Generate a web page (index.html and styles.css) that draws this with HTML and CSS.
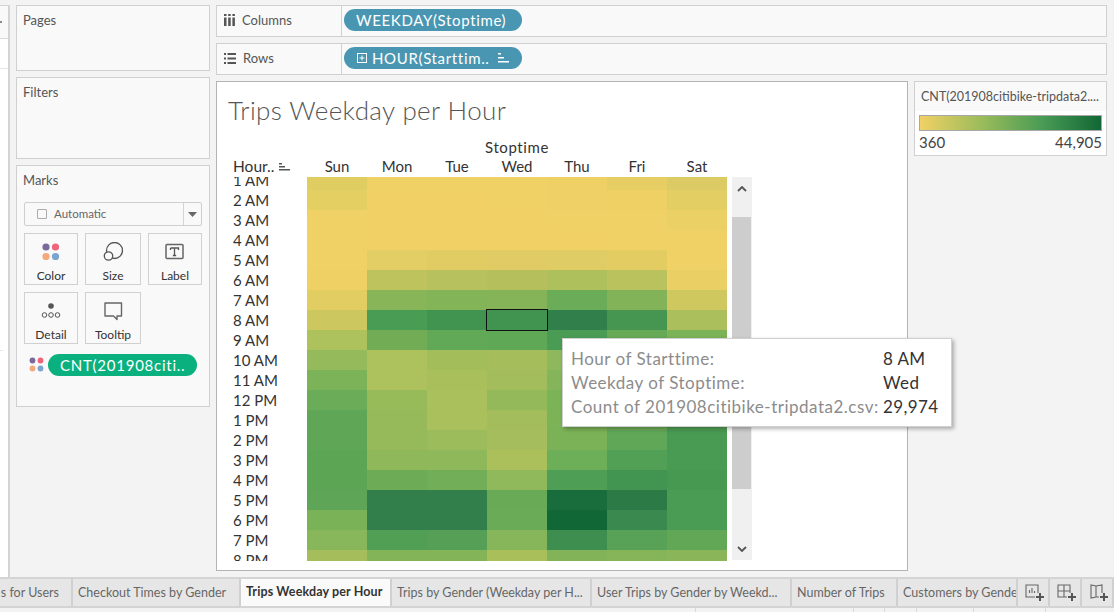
FILE: index.html
```html
<!DOCTYPE html>
<html lang="en">
<head>
<meta charset="utf-8">
<title>Trips Weekday per Hour</title>
<link rel="stylesheet" href="styles.css">
</head>
<body>
<div class="app">
  <div class="main">
    <aside class="stub">
      <div class="stub-head"><span class="stub-mark"></span></div>
      <div class="stub-row"></div>
      <div class="stub-row stub-long"></div>
    </aside>

    <section class="cards">
      <div class="card card-pages"><h2 class="card-title">Pages</h2></div>
      <div class="card card-filters"><h2 class="card-title">Filters</h2></div>
      <div class="card card-marks">
        <h2 class="card-title">Marks</h2>
        <div class="mark-select">
          <span class="mark-check"></span>
          <span class="mark-type">Automatic</span>
          <span class="mark-drop"><svg width="9" height="5" viewBox="0 0 9 5"><path d="M0 0h9L4.500 5z" fill="#666"/></svg></span>
        </div>
        <div class="mark-grid">
          <div class="mark-btn">
            <svg class="mark-icon" width="20" height="20" viewBox="0 0 20 20"><circle cx="5" cy="5" r="3.600" fill="#7a6a9c"/><circle cx="14.500" cy="5" r="3.600" fill="#ef6478"/><circle cx="5" cy="14.500" r="3.600" fill="#f2a97b"/><circle cx="14.500" cy="14.500" r="3.600" fill="#7ba4cf"/></svg>
            <span>Color</span>
          </div>
          <div class="mark-btn">
            <svg class="mark-icon" width="20" height="20" viewBox="0 0 20 20"><circle cx="11.500" cy="8.500" r="8" fill="none" stroke="#555" stroke-width="1.300"/><circle cx="5.500" cy="14" r="4.200" fill="#f9f9f9" stroke="#555" stroke-width="1.300"/></svg>
            <span>Size</span>
          </div>
          <div class="mark-btn">
            <svg class="mark-icon" width="20" height="20" viewBox="0 0 20 20"><rect x="1" y="2.500" width="17" height="14" rx="1" fill="none" stroke="#666" stroke-width="1.500"/><path d="M5.500 6h8v2M9.500 6v7.500M7.800 13.500h3.400M5.500 6v2" fill="none" stroke="#555" stroke-width="1.300"/></svg>
            <span>Label</span>
          </div>
          <div class="mark-btn">
            <svg class="mark-icon" width="20" height="20" viewBox="0 0 20 20"><circle cx="10" cy="5" r="2.800" fill="#555"/><circle cx="3.500" cy="14" r="2.300" fill="none" stroke="#555"/><circle cx="10" cy="14" r="2.300" fill="none" stroke="#555"/><circle cx="16.500" cy="14" r="2.300" fill="none" stroke="#555"/></svg>
            <span>Detail</span>
          </div>
          <div class="mark-btn">
            <svg class="mark-icon" width="20" height="20" viewBox="0 0 20 20"><path d="M2 2h16.500v13h-4.500v3.500L10.500 15H2z" fill="none" stroke="#666" stroke-width="1.400" stroke-linejoin="round"/></svg>
            <span>Tooltip</span>
          </div>
        </div>
        <div class="mark-field">
          <svg width="16" height="16" viewBox="0 0 16 16"><circle cx="3.500" cy="3.500" r="2.900" fill="#7a6a9c"/><circle cx="11.500" cy="3.500" r="2.900" fill="#ef6478"/><circle cx="3.500" cy="11.500" r="2.900" fill="#f2a97b"/><circle cx="11.500" cy="11.500" r="2.900" fill="#7ba4cf"/></svg>
          <span class="pill pill-green">CNT(201908citi..</span>
        </div>
      </div>
    </section>

    <section class="workspace">
      <div class="shelf">
        <div class="shelf-label">
          <svg width="11" height="12" viewBox="0 0 11 12"><path d="M0 0h2.500v2H0zM4.200 0h2.500v2H4.200zM8.400 0h2.500v2H8.400zM0 3.500h2.500V12H0zM4.200 3.500h2.500V12H4.200zM8.400 3.500h2.500V12H8.400z" fill="#555"/></svg>
          <span>Columns</span>
        </div>
        <div class="shelf-body"><span class="pill pill-blue">WEEKDAY(Stoptime)</span></div>
      </div>
      <div class="shelf">
        <div class="shelf-label">
          <svg width="12" height="11" viewBox="0 0 12 11"><path d="M0 0h2v2H0zM3.500 0H12v2H3.500zM0 4.500h2v2H0zM3.500 4.500H12v2H3.500zM0 9h2v2H0zM3.500 9H12v2H3.500z" fill="#555"/></svg>
          <span>Rows</span>
        </div>
        <div class="shelf-body">
          <span class="pill pill-blue pill-rows">
            <svg width="10" height="10" viewBox="0 0 10 10"><rect x=".5" y=".5" width="9" height="9" fill="none" stroke="#fff"/><path d="M2.500 5h5M5 2.500v5" stroke="#fff"/></svg>
            <span class="pill-text">HOUR(Starttim..</span>
            <svg width="11" height="10" viewBox="0 0 11 10"><path d="M0 0h3v1.500H0zM0 4h6v1.500H0zM0 8h11v1.500H0z" fill="#fff"/></svg>
          </span>
        </div>
      </div>

      <div class="stage">
        <div class="view">
          <h1 class="view-title">Trips Weekday per Hour</h1>
          <div class="field-head">Stoptime</div>
          <div class="axis">
            <div class="axis-corner">
              <span>Hour..</span>
              <svg width="11" height="8" viewBox="0 0 11 8"><path d="M0 0h3v1.500H0zM0 3h6v1.500H0zM0 6h11v1.500H0z" fill="#555"/></svg>
            </div>
            <span class="day">Sun</span><span class="day">Mon</span><span class="day">Tue</span><span class="day">Wed</span><span class="day">Thu</span><span class="day">Fri</span><span class="day">Sat</span>
          </div>
          <div class="plot">
            <div class="heat-window">
              <div class="heat">
                <span class="hour">1 AM</span><i style="background:#e0cd62"></i><i style="background:#f0d166"></i><i style="background:#f0d166"></i><i style="background:#efd165"></i><i style="background:#eed065"></i><i style="background:#e6ce64"></i><i style="background:#dccb64"></i>
                <span class="hour">2 AM</span><i style="background:#e4cf63"></i><i style="background:#f1d166"></i><i style="background:#f1d166"></i><i style="background:#f0d166"></i><i style="background:#efd066"></i><i style="background:#eed065"></i><i style="background:#e3ce63"></i>
                <span class="hour">3 AM</span><i style="background:#efd165"></i><i style="background:#f1d166"></i><i style="background:#f1d166"></i><i style="background:#f1d166"></i><i style="background:#f0d166"></i><i style="background:#f0d166"></i><i style="background:#ebd065"></i>
                <span class="hour">4 AM</span><i style="background:#f0d166"></i><i style="background:#f1d166"></i><i style="background:#f1d166"></i><i style="background:#f1d166"></i><i style="background:#f1d166"></i><i style="background:#f0d166"></i><i style="background:#f0d166"></i>
                <span class="hour">5 AM</span><i style="background:#f0d166"></i><i style="background:#e3cd65"></i><i style="background:#e1cc64"></i><i style="background:#e0cb64"></i><i style="background:#dfcc64"></i><i style="background:#e3cd63"></i><i style="background:#f0d166"></i>
                <span class="hour">6 AM</span><i style="background:#eed065"></i><i style="background:#bfc35e"></i><i style="background:#b7c15d"></i><i style="background:#b5c05d"></i><i style="background:#adc05c"></i><i style="background:#b9c25d"></i><i style="background:#e9cf64"></i>
                <span class="hour">7 AM</span><i style="background:#e2cd62"></i><i style="background:#89b559"></i><i style="background:#84b458"></i><i style="background:#85b458"></i><i style="background:#6bac58"></i><i style="background:#82b358"></i><i style="background:#cfc85f"></i>
                <span class="hour">8 AM</span><i style="background:#ccc85f"></i><i style="background:#499c54"></i><i style="background:#419450"></i><i class="picked" style="background:#419450"></i><i style="background:#317f4b"></i><i style="background:#469651"></i><i style="background:#abc05c"></i>
                <span class="hour">9 AM</span><i style="background:#adc25c"></i><i style="background:#72ad55"></i><i style="background:#61a857"></i><i style="background:#5ea856"></i><i style="background:#4a9c54"></i><i style="background:#66a957"></i><i style="background:#7cb357"></i>
                <span class="hour">10 AM</span><i style="background:#94ba5c"></i><i style="background:#adc15c"></i><i style="background:#a4bd5b"></i><i style="background:#a5bd5b"></i><i style="background:#8db85b"></i><i style="background:#9dbc5a"></i><i style="background:#93b95a"></i>
                <span class="hour">11 AM</span><i style="background:#7cb358"></i><i style="background:#adc15c"></i><i style="background:#a8bf5c"></i><i style="background:#a3bc5c"></i><i style="background:#85b55a"></i><i style="background:#90b95a"></i><i style="background:#7cb357"></i>
                <span class="hour">12 PM</span><i style="background:#6aac57"></i><i style="background:#98bb5a"></i><i style="background:#a9c05c"></i><i style="background:#93b95b"></i><i style="background:#7bb357"></i><i style="background:#7db358"></i><i style="background:#6aab57"></i>
                <span class="hour">1 PM</span><i style="background:#60a657"></i><i style="background:#96ba5a"></i><i style="background:#a9c05c"></i><i style="background:#a4bd5c"></i><i style="background:#7cb357"></i><i style="background:#70ae57"></i><i style="background:#52a055"></i>
                <span class="hour">2 PM</span><i style="background:#60a657"></i><i style="background:#96ba5a"></i><i style="background:#9cbc5b"></i><i style="background:#a5bd5c"></i><i style="background:#7bb257"></i><i style="background:#60a757"></i><i style="background:#499a52"></i>
                <span class="hour">3 PM</span><i style="background:#5ca555"></i><i style="background:#8fb85a"></i><i style="background:#8fb85a"></i><i style="background:#abbf5a"></i><i style="background:#6dae58"></i><i style="background:#52a055"></i><i style="background:#499a52"></i>
                <span class="hour">4 PM</span><i style="background:#5ca555"></i><i style="background:#6eab57"></i><i style="background:#72ad58"></i><i style="background:#90b95b"></i><i style="background:#4f9e55"></i><i style="background:#429550"></i><i style="background:#479851"></i>
                <span class="hour">5 PM</span><i style="background:#5fa557"></i><i style="background:#327f4b"></i><i style="background:#327f4b"></i><i style="background:#69aa57"></i><i style="background:#196d3c"></i><i style="background:#2c7b47"></i><i style="background:#4a9c54"></i>
                <span class="hour">6 PM</span><i style="background:#7ab258"></i><i style="background:#327f4b"></i><i style="background:#327f4b"></i><i style="background:#6aab57"></i><i style="background:#116735"></i><i style="background:#3a8a4f"></i><i style="background:#4a9c54"></i>
                <span class="hour">7 PM</span><i style="background:#88b65a"></i><i style="background:#519f55"></i><i style="background:#569f57"></i><i style="background:#87b559"></i><i style="background:#3e8e50"></i><i style="background:#57a256"></i><i style="background:#62a756"></i>
                <span class="hour">8 PM</span><i style="background:#a5bd5a"></i><i style="background:#83b458"></i><i style="background:#84b458"></i><i style="background:#a9bf5a"></i><i style="background:#82b358"></i><i style="background:#85b558"></i><i style="background:#8ab558"></i>
              </div>
            </div>
            <div class="scrollbar">
              <div class="scroll-btn"><svg width="10" height="6" viewBox="0 0 10 6"><path d="M1 5l4-4 4 4" fill="none" stroke="#555" stroke-width="1.800"/></svg></div>
              <div class="scroll-thumb"></div>
              <div class="scroll-rest"><svg width="10" height="6" viewBox="0 0 10 6"><path d="M1 1l4 4 4-4" fill="none" stroke="#555" stroke-width="1.800"/></svg></div>
            </div>
          </div>
        </div>
        <div class="legend">
          <div class="legend-title">CNT(201908citibike-tripdata2....</div>
          <div class="legend-body">
            <div class="legend-ramp"></div>
            <div class="legend-scale"><span>360</span><span>44,905</span></div>
          </div>
        </div>
      </div>
    </section>
  </div>

  <nav class="tabs">
    <div class="tab tab-a"><span>s for Users</span></div>
    <div class="tab tab-b">Checkout Times by Gender</div>
    <div class="tab tab-c tab-active">Trips Weekday per Hour</div>
    <div class="tab tab-d">Trips by Gender (Weekday per H...</div>
    <div class="tab tab-e">User Trips by Gender by Weekd...</div>
    <div class="tab tab-f">Number of Trips</div>
    <div class="tab tab-g">Customers by Gender</div>
    <div class="tab-icon"><svg width="22" height="22" viewBox="0 0 22 22"><path d="M12 15H3V3h12v8M6.500 11V8M9 11V6M11.500 11V9" fill="none" stroke="#666" stroke-width="1.100"/><path d="M17 11v8M13 15h8" stroke="#555" stroke-width="2"/></svg></div>
    <div class="tab-icon"><svg width="22" height="22" viewBox="0 0 22 22"><path d="M12 15H3V3h12v8M3 9h12M9 3v12" fill="none" stroke="#666" stroke-width="1.100"/><path d="M17 11v8M13 15h8" stroke="#555" stroke-width="2"/></svg></div>
    <div class="tab-icon"><svg width="22" height="22" viewBox="0 0 22 22"><path d="M12 15H9l-5 1V3l5 1 6-1v8M9 4v11" fill="none" stroke="#666" stroke-width="1.100"/><path d="M17 11v8M13 15h8" stroke="#555" stroke-width="2"/></svg></div>
  </nav>
  <div class="status">
    <span class="st st-1"></span><span class="st st-2"></span><span class="st st-3"></span><span class="st st-4"></span><span class="st st-5"></span><span class="st st-6"></span><span class="st st-7"></span>
  </div>

  <div class="tooltip">
    <span class="tip-key">Hour of Starttime:</span><span class="tip-val">8 AM</span>
    <span class="tip-key">Weekday of Stoptime:</span><span class="tip-val">Wed</span>
    <span class="tip-key">Count of 201908citibike-tripdata2.csv:</span><span class="tip-val">29,974</span>
  </div>
</div>
</body>
</html>
```
FILE: styles.css
```css
* { box-sizing: border-box; }
html, body { margin: 0; padding: 0; }
body { background: #f3f3f3; font-family: Lato, "Open Sans", "Liberation Sans", sans-serif; color: #333; overflow: hidden; }
.app { position: relative; width: 1114px; height: 612px; display: flex; flex-direction: column; overflow: hidden; }
.main { height: 577px; display: flex; padding-top: 5px; }

.stub { width: 10px; background: #fff; border-right: 2px solid #d4d4d4; border-top: 1px solid #d4d4d4; }
.stub-head { height: 33px; background: #f9f9f9; border-bottom: 1px solid #d9d9d9; display: flex; align-items: center; }
.stub-mark { width: 2px; height: 2px; margin-left: 0; background: #888; }
.stub-row { height: 30px; border-bottom: 1px solid #e6e6e6; }
.stub-long { height: 282px; width: 3px; }

.cards { width: 194px; margin-left: 6px; display: flex; flex-direction: column; gap: 6px; }
.card { background: #f9f9f9; border: 1px solid #d0d0d0; padding: 7px 6px; }
.card-pages { height: 66px; }
.card-filters { height: 82px; }
.card-marks { height: 242px; }
.card-title { margin: 0; font-size: 13px; line-height: 15px; font-weight: 400; color: #555; }

.mark-select { margin: 14px 0 0 1px; width: 178px; height: 24px; background: #f9f9f9; border: 1px solid #cfcfcf; border-radius: 2px; display: flex; align-items: center; font-size: 11.500px; color: #666; }
.mark-check { width: 10px; height: 10px; margin-left: 12px; border: 1px solid #aaa; border-radius: 1px; }
.mark-type { margin-left: 7px; margin-bottom: 1px; flex: 1; }
.mark-drop { width: 18px; height: 22px; border-left: 1px solid #d4d4d4; display: flex; align-items: center; justify-content: center; }
.mark-grid { margin: 7px 0 0 1px; width: 178px; display: grid; grid-template-columns: 54px 56px 54px; grid-auto-rows: 52px; column-gap: 7px; row-gap: 7px; }
.mark-btn { border: 1px solid #d0d0d0; display: flex; flex-direction: column; align-items: center; font-size: 12px; color: #333; padding-top: 8px; }
.mark-btn span { margin-top: 6px; line-height: 15px; }
.mark-icon { display: block; }
.mark-field { margin: 10px 0 0 6px; display: flex; align-items: center; gap: 3px; }

.pill { display: inline-flex; align-items: center; height: 22px; border-radius: 11px; color: #fff; font-size: 15px; white-space: nowrap; }
.pill-green { width: 149px; background: #0ab17f; padding-left: 12px; letter-spacing: .75px; }
.pill-blue { width: 178px; background: #4996b2; padding-left: 12px; letter-spacing: .65px; }
.pill-rows { padding-left: 13px; }
.pill-text { margin-left: 5px; flex: 1; }
.pill-rows svg:last-child { margin-right: 13px; }

.workspace { width: 891px; margin-left: 6px; display: flex; flex-direction: column; gap: 6px; }
.shelf { height: 32px; display: flex; background: #f9f9f9; border: 1px solid #d0d0d0; }
.shelf-label { width: 125px; border-right: 1px solid #d0d0d0; display: flex; align-items: center; font-size: 13px; color: #555; padding: 0 0 2px 7px; gap: 7px; }
.shelf-body { flex: 1; display: flex; align-items: center; padding: 0 0 2px 2px; }

.stage { height: 490px; display: flex; align-items: flex-start; gap: 6px; }
.view { width: 692px; height: 490px; background: #fff; border: 1px solid #b4b4b4; }
.view-title { margin: 12px 0 0 11px; font-size: 26px; line-height: 32px; font-weight: 300; color: #555; letter-spacing: .4px; }
.field-head { margin: 12px 0 0 90px; width: 420px; text-align: center; font-size: 15px; line-height: 18px; color: #333; letter-spacing: .6px; }
.axis { display: flex; height: 21px; line-height: 21px; font-size: 15px; color: #333; }
.axis-corner { width: 90px; padding-left: 16px; display: flex; align-items: center; gap: 5px; }
.axis-corner span { font-size: 15.500px; }
.day { width: 60px; text-align: center; }

.plot { display: flex; align-items: flex-start; }
.heat-window { width: 510px; height: 384px; overflow: hidden; }
.heat { margin-top: -7px; display: grid; grid-template-columns: 90px repeat(7, 60px); grid-auto-rows: 20px; }
.heat i { display: block; }
.heat .picked { position: relative; outline: 1px solid #111; }
.hour { padding-left: 16px; font-size: 15px; line-height: 20px; color: #333; white-space: nowrap; }

.scrollbar { margin-left: 5px; width: 20px; height: 383px; background: #f0f0f0; display: flex; flex-direction: column; }
.scroll-btn { height: 40px; display: flex; justify-content: center; padding-top: 9px; }
.scroll-thumb { height: 272px; width: 19px; background: #cdcdcd; }
.scroll-rest { flex: 1; display: flex; justify-content: center; align-items: flex-end; padding-bottom: 8px; }

.legend { width: 193px; height: 75px; background: #fff; border: 1px solid #d0d0d0; }
.legend-title { height: 29px; background: #f9f9f9; padding: 7px 6px 0; font-size: 12.500px; line-height: 16px; color: #555; white-space: nowrap; overflow: hidden; }
.legend-body { padding: 4px 4px 0; }
.legend-ramp { height: 16px; border: 1px solid #a8a8a8; background: linear-gradient(90deg, #f0d165, #98bb5a 35%, #4a9c55 67%, #116735); }
.legend-scale { display: flex; justify-content: space-between; font-size: 15px; line-height: 22px; color: #444; }

.tabs { height: 31px; display: flex; background: #e6e6e6; border-top: 2px solid #d4d4d4; border-bottom: 2px solid #d4d4d4; font-size: 12.500px; color: #666; }
.tab { flex: none; height: 27px; line-height: 27px; padding-left: 5px; border-right: 2px solid #d0d0d0; white-space: nowrap; overflow: hidden; }
.tab-a { width: 73px; padding: 0 12px 0 0; display: flex; justify-content: flex-end; }
.tab-b { width: 168px; }
.tab-c { width: 151px; letter-spacing: .12px; }
.tab-d { width: 200px; }
.tab-e { width: 200px; }
.tab-f { width: 106px; }
.tab-g { width: 120px; }
.tab-active { background: #fafafa; color: #333; font-weight: 700; height: 27px; line-height: 25px; border-right: 2px solid #d0d0d0; }
.tab-icon { flex: none; width: 32px; height: 27px; padding-left: 2px; border-right: 2px solid #d0d0d0; display: flex; align-items: center; justify-content: center; }

.status { flex: 1; display: flex; background: #f3f3f3; }
.st { flex: none; height: 100%; border-right: 1px solid #d9d9d9; }
.st-1 { width: 696px; }
.st-2 { width: 158px; }
.st-3 { width: 31px; }
.st-4 { width: 32px; }
.st-5 { width: 57px; }
.st-6 { width: 72px; }
.st-7 { width: 68px; border-right: 0; }

.tooltip { position: absolute; left: 562px; top: 338px; width: 390px; height: 89px; background: #fff; border: 1px solid #d0d0d0; box-shadow: 2px 2px 4px rgba(0,0,0,.3); padding: 8px 8px 0; display: grid; grid-template-columns: 312px auto; grid-auto-rows: 24px; font-size: 17px; line-height: 24px; }
.tip-key { color: #8c8c8c; white-space: nowrap; letter-spacing: .5px; }
.tip-val { color: #333; letter-spacing: .4px; }
```
